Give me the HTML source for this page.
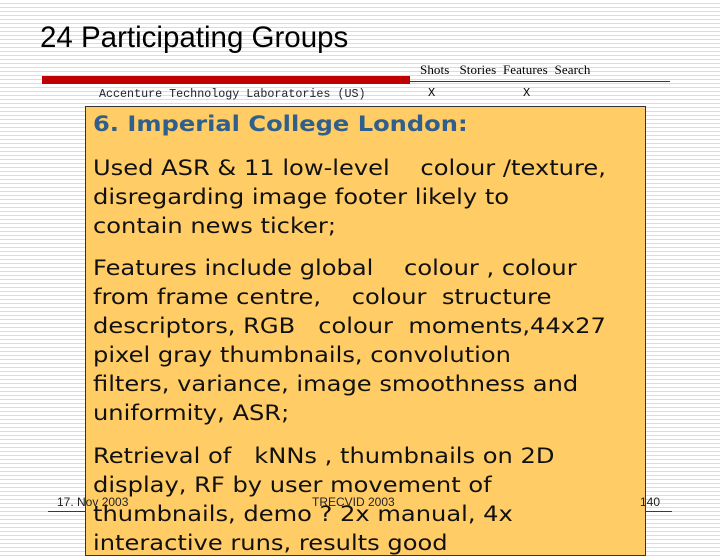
<!DOCTYPE html>
<html><head><meta charset="utf-8"><style>
html,body{margin:0;padding:0}
body{width:720px;height:540px;overflow:hidden;position:relative;
background:repeating-linear-gradient(to bottom,#fff 0,#fff 3px,#dcdcdc 3px,#dcdcdc 4px);font-family:"Liberation Sans",sans-serif}
.a{position:absolute;white-space:nowrap}
.box{position:absolute;left:85px;top:106px;width:561px;height:450px;background:#ffcc66;border:1px solid #333;box-sizing:border-box}
.t{position:absolute;left:93px;font-family:"DejaVu Sans",sans-serif;font-size:21px;color:#111;white-space:pre;line-height:29px;transform:scaleX(1.15);transform-origin:0 0}
.f{z-index:5}
</style></head><body>
<div class="a" style="left:40px;top:21px;font-size:29.5px;color:#000">24 Participating Groups</div>
<div class="a" style="left:42px;top:76px;width:368px;height:8px;background:#c00000"></div>
<div class="a" style="left:410px;top:81px;width:260px;height:1px;background:#c00000"></div>
<div class="a" style="left:420px;top:62px;font-family:'Liberation Serif',serif;font-size:13px;letter-spacing:0.1px;color:#000">Shots&nbsp;&nbsp; Stories&nbsp; Features&nbsp; Search</div>
<div class="a" style="left:99px;top:87px;font-family:'Liberation Mono',monospace;font-size:11.7px;color:#223">Accenture Technology Laboratories (US)</div>
<div class="a" style="left:428px;top:86px;font-family:'Liberation Mono',monospace;font-size:12px">X</div>
<div class="a" style="left:523px;top:86px;font-family:'Liberation Mono',monospace;font-size:12px">X</div>
<div class="a" style="left:48px;top:511px;width:40px;height:1px;background:#c00000"></div>
<div class="a" style="left:646px;top:511px;width:26px;height:1px;background:#c00000"></div>
<div class="box"></div>
<div class="t" style="top:110px;font-weight:bold;color:#2f5f8a">6. Imperial College London:</div>
<div class="t" style="top:154px">Used ASR &amp; 11 low-level    colour /texture,
disregarding image footer likely to
contain news ticker;</div>
<div class="t" style="top:254px">Features include global    colour , colour
from frame centre,    colour  structure
descriptors, RGB   colour  moments,44x27
pixel gray thumbnails, convolution
filters, variance, image smoothness and
uniformity, ASR;</div>
<div class="t" style="top:442px">Retrieval of   kNNs , thumbnails on 2D
display, RF by user movement of
thumbnails, demo ? 2x manual, 4x
interactive runs, results good</div>
<div class="a f" style="left:57px;top:495px;font-size:12px;color:#222">17. Nov 2003</div>
<div class="a f" style="left:312px;top:495px;font-size:12px;color:#222">TRECVID 2003</div>
<div class="a f" style="left:640px;top:495px;font-size:12px;color:#222">140</div>
</body></html>
